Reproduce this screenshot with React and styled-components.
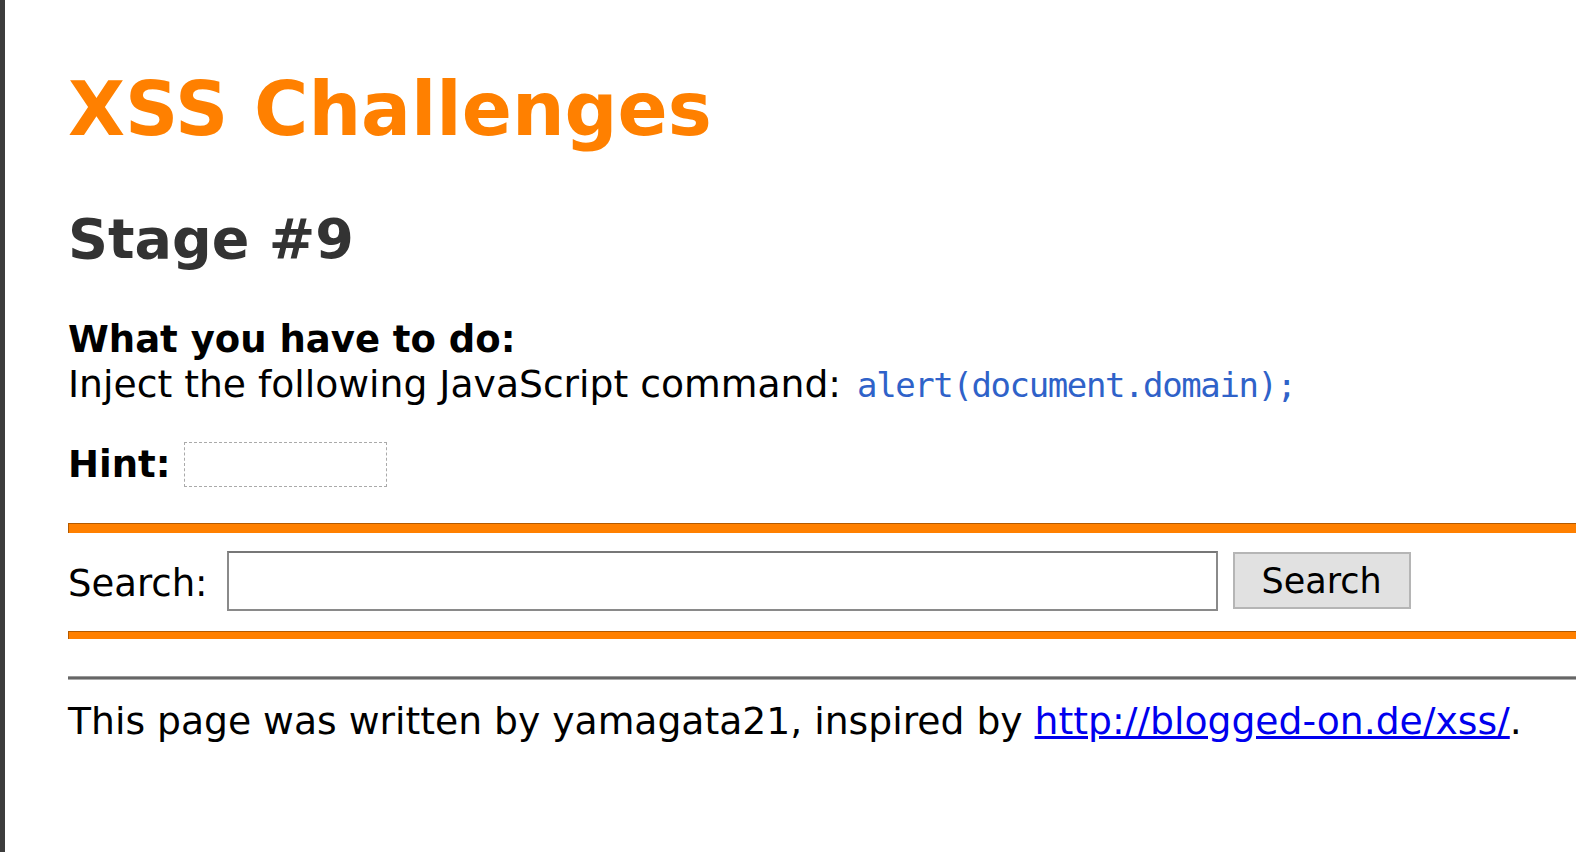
import React from 'react';
import styled, { createGlobalStyle } from 'styled-components';

const GlobalStyle = createGlobalStyle`
    html, body {
        margin: 0;
        padding: 0;
        background: #fff;
    }
    body {
        font-family: "DejaVu Sans", Verdana, sans-serif;
        font-size: 37px;
        color: #000;
    }
`;

const Page = styled.div`
    min-height: 100vh;
    box-sizing: border-box;
    border-left: 5px solid #3c3c3c;
    padding-left: 63px;
    padding-top: 66px;
    overflow: hidden;
`;

const Title = styled.h1`
    margin: 0;
    font-size: 74px;
    font-weight: bold;
    color: #ff8000;
    line-height: 86px;
`;

const StageTitle = styled.h2`
    margin: 55px 0 0;
    font-size: 55.5px;
    font-weight: bold;
    color: #333;
    line-height: 64px;
`;

const Task = styled.div`
    margin-top: 46px;
    font-size: 37.7px;
    line-height: 44.4px;
`;

const Label = styled.b`
    font-size: 37px;
    font-weight: bold;
`;

const Code = styled.span`
    font-family: "DejaVu Sans Mono", "Liberation Mono", monospace;
    font-size: 34px;
    letter-spacing: -1.4px;
    color: #2f62c9;
    margin-left: 4px;
`;

const HintRow = styled.div`
    display: flex;
    align-items: center;
    gap: 14px;
    margin-top: 34px;
`;

const HintBox = styled.div`
    width: 201px;
    height: 43px;
    border: 1px dashed #aaa;
`;

const OrangeRule = styled.div`
    height: ${p => p.$thick}px;
    margin-top: ${p => p.$gap}px;
    background: #ff8000;
    border-top: 1px solid #b35a00;
    border-left: 1px solid #b35a00;
`;

const SearchForm = styled.form`
    display: flex;
    align-items: center;
    margin-top: 18px;
`;

const SearchLabel = styled.label`
    margin-right: 19px;
    position: relative;
    top: 3px;
`;

const SearchInput = styled.input`
    box-sizing: border-box;
    width: 991px;
    height: 60px;
    border: 2px solid #8a8a8a;
    border-top-color: #777;
    padding: 0 6px;
    font: inherit;
    outline: none;
`;

const SearchButton = styled.button`
    box-sizing: border-box;
    margin-left: 15px;
    width: 178px;
    height: 57px;
    background: #e1e1e1;
    border: 2px solid #b5b5b5;
    font-family: "DejaVu Sans", Verdana, sans-serif;
    font-size: 35px;
    color: #000;
    padding: 0;
`;

const GrayRule = styled.div`
    margin-top: 37px;
    height: 2px;
    background: #666;
    border-top: 1px solid #999;
    border-bottom: 1px solid #aaa;
`;

const Footer = styled.p`
    margin: 19px 0 0;
    font-size: 37.7px;
    line-height: 44.4px;
`;

const Link = styled.a`
    color: #0000ee;
    text-decoration: underline;
`;

export default function App() {
    return (
        <>
            <GlobalStyle />
            <Page>
                <Title>XSS Challenges</Title>
                <StageTitle>Stage #9</StageTitle>
                <Task>
                    <Label>What you have to do:</Label>
                    <br />
                    Inject the following JavaScript command: <Code>alert(document.domain);</Code>
                </Task>
                <HintRow>
                    <Label>Hint:</Label>
                    <HintBox />
                </HintRow>
                <OrangeRule $thick={9} $gap={36} />
                <SearchForm onSubmit={e => e.preventDefault()}>
                    <SearchLabel>Search:</SearchLabel>
                    <SearchInput type="text" name="p1" />
                    <SearchButton type="submit">Search</SearchButton>
                </SearchForm>
                <OrangeRule $thick={7} $gap={20} />
                <GrayRule />
                <Footer>
                    This page was written by yamagata21, inspired by{' '}
                    <Link href="#">http://blogged-on.de/xss/</Link>.
                </Footer>
            </Page>
        </>
    );
}
